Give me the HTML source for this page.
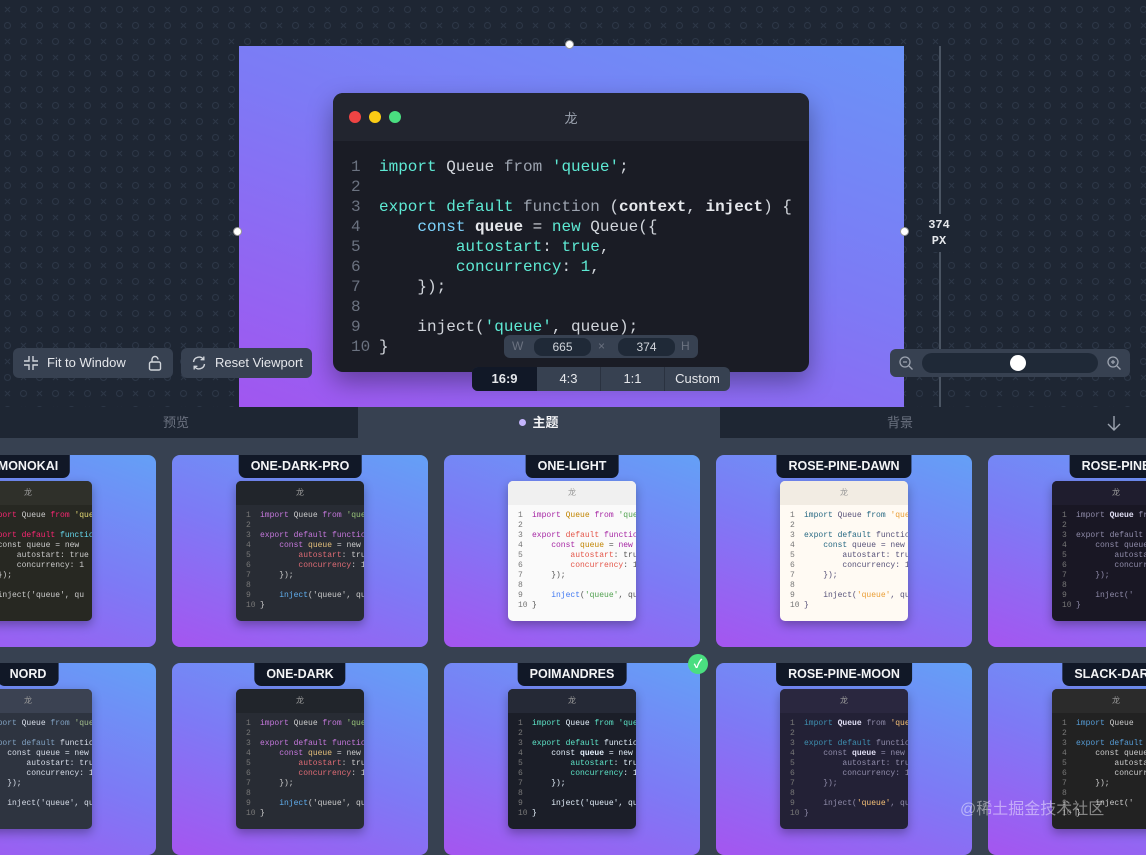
<!DOCTYPE html>
<html><head><meta charset="utf-8"><style>
*{margin:0;padding:0;box-sizing:border-box}
body{width:1146px;height:840px;overflow:hidden;background:#374151;font-family:"Liberation Sans","Noto Sans CJK SC",sans-serif;position:relative}
.top{position:absolute;left:0;top:0;width:1146px;height:407px;background:#1e2633;overflow:hidden}
.canvas{position:absolute;left:239px;top:46px;width:665px;height:361px;background:linear-gradient(200deg,#6a93f7 0%,#7d7af5 45%,#a156f0 100%)}
.win{position:absolute;left:333px;top:93px;width:476px;height:279px;border-radius:10px;background:#1a1c25;box-shadow:0 10px 25px rgba(0,0,0,.35);overflow:hidden}
.tb{height:48px;background:#22252f;position:relative}
.dot{position:absolute;width:12px;height:12px;border-radius:50%;top:18px}
.code{font-family:"Liberation Mono","DejaVu Sans Mono",monospace;font-size:16px;line-height:20px;color:#d1d5db;position:absolute;left:18px;top:64px;white-space:pre}
.n{color:#6b7280;display:inline-block;width:28px}
.k{color:#5eead4}.s{color:#5eead4}.w{color:#e5e7eb;font-weight:bold}.g{color:#9ca3af}.b{color:#7dd3fc}
.btn{position:absolute;top:348px;height:30px;background:#374151;border-radius:6px;color:#e5e7eb;font-size:13px;line-height:30px}
.handle{position:absolute;width:9px;height:9px;border-radius:50%;background:#fff;border:1px solid #999}
.tabs{position:absolute;top:407px;left:0;width:1146px;height:31px;background:#1e2633;color:#6b7280;font-size:13px;line-height:31px}
.card{position:absolute;width:256px;height:192px;border-radius:8px;background:linear-gradient(200deg,#64a0f6 0%,#7d7af5 50%,#a555f0 100%);overflow:hidden}
.lab{position:absolute;top:0;height:23px;background:#111827;color:#f3f4f6;font-weight:bold;font-size:12.5px;line-height:23px;text-align:center;border-radius:0 0 7px 7px;padding:0 12px;left:50%;transform:translateX(-50%);white-space:nowrap}
.mw{position:absolute;left:64px;top:26px;width:128px;height:140px;border-radius:5px;background:#1f2229;overflow:hidden;box-shadow:0 4px 10px rgba(0,0,0,.3)}
.mt{height:24px;background:#282b33;position:relative;font-size:8px;color:#999;text-align:center;line-height:24px}
.mc{font-family:"Liberation Mono",monospace;font-size:8px;line-height:10px;white-space:pre;color:#ccc;position:absolute;left:10px;top:30px}
.mc i{font-style:normal;color:#777;display:inline-block;width:14px}
.light{background:#fafafa}.light .mt{background:#f0f0f0}.light .mc{color:#555}
.light .mc .k{color:#a626a4}.light .mc .s{color:#50a14f}
.cream{background:#fffaf3}.cream .mt{background:#f2ece3}.cream .mc{color:#575279}
</style></head><body>
<div class="top">
<svg width="1146" height="407" style="position:absolute;left:0;top:0"><defs><pattern id="p" width="32" height="32" patternUnits="userSpaceOnUse">
<g stroke="#2d3747" stroke-width="1" fill="none"><path d="M5 7l5 5M10 7l-5 5"/><circle cx="23.5" cy="9.5" r="3"/><circle cx="7.5" cy="25.5" r="3"/><path d="M21 23l5 5M26 23l-5 5"/></g></pattern></defs><rect width="1146" height="407" fill="url(#p)"/></svg>
<div class="canvas"></div>
<div style="position:absolute;left:939px;top:46px;width:2px;height:361px;background:#4b5563"></div>
<div style="position:absolute;left:922px;top:214px;width:34px;height:38px;background:#1e2633;color:#e5e7eb;font-weight:bold;font-size:12px;text-align:center;line-height:16px;padding-top:3px;font-family:'Liberation Mono',monospace">374<br>PX</div>
</div>
<div class="handle" style="left:565px;top:40px"></div>
<div class="handle" style="left:233px;top:227px"></div>
<div class="handle" style="left:900px;top:227px"></div>
<div class="win"><div class="tb"><div class="dot" style="left:16px;background:#ef4444"></div><div class="dot" style="left:36px;background:#facc15"></div><div class="dot" style="left:56px;background:#4ade80"></div><div style="position:absolute;left:0;right:0;top:15px;text-align:center;color:#9ca3af;font-size:13px">龙</div></div>
<div class="code"><span class="n">1</span><span class="k">import</span> Queue <span class="g">from</span> <span class="s">'queue'</span>;
<span class="n">2</span>
<span class="n">3</span><span class="k">export default</span> <span class="g">function</span> (<span class="w">context</span>, <span class="w">inject</span>) {
<span class="n">4</span>    <span class="b">const</span> <span class="w">queue</span> = <span class="k">new</span> Queue({
<span class="n">5</span>        <span class="k">autostart</span>: <span class="k">true</span>,
<span class="n">6</span>        <span class="k">concurrency</span>: <span class="k">1</span>,
<span class="n">7</span>    });
<span class="n">8</span>
<span class="n">9</span>    inject(<span class="s">'queue'</span>, queue);
<span class="n">10</span>}</div></div>
<div style="position:absolute;left:504px;top:335px;width:194px;height:23px;background:#374151;border-radius:6px;color:#6b7280;font-size:12px;line-height:23px">
<span style="position:absolute;left:8px">W</span><span style="position:absolute;left:30px;top:3px;width:57px;height:18px;border-radius:8px;background:#1f2937;color:#d1d5db;text-align:center;line-height:18px">665</span><span style="position:absolute;left:94px">×</span><span style="position:absolute;left:114px;top:3px;width:57px;height:18px;border-radius:8px;background:#1f2937;color:#d1d5db;text-align:center;line-height:18px">374</span><span style="position:absolute;left:177px">H</span></div>
<div style="position:absolute;left:472px;top:367px;width:258px;height:24px;background:#374151;border-radius:6px;color:#e5e7eb;font-size:13px;line-height:24px;display:flex;overflow:hidden">
<div style="width:65px;text-align:center;background:#111827;font-weight:bold">16:9</div><div style="width:64px;text-align:center;border-right:1px solid #2a3240">4:3</div><div style="width:64px;text-align:center;border-right:1px solid #2a3240">1:1</div><div style="width:65px;text-align:center">Custom</div></div>
<div class="btn" style="left:13px;width:160px">
<svg width="16" height="16" viewBox="0 0 16 16" style="position:absolute;left:10px;top:7px" fill="none" stroke="#d1d5db" stroke-width="1.4"><path d="M6 1v5H1M10 1v5h5M6 15v-5H1M10 15v-5h5"/></svg>
<span style="position:absolute;left:34px">Fit to Window</span>
<svg width="14" height="16" viewBox="0 0 14 16" style="position:absolute;left:135px;top:7px" fill="none" stroke="#d1d5db" stroke-width="1.4"><rect x="1.5" y="7" width="11" height="8" rx="1.5"/><path d="M4 7V4.5a3 3 0 0 1 6 0"/></svg></div>
<div class="btn" style="left:181px;width:131px">
<svg width="16" height="16" viewBox="0 0 16 16" style="position:absolute;left:10px;top:7px" fill="none" stroke="#d1d5db" stroke-width="1.4"><path d="M2.5 7a5.5 5.5 0 0 1 10-2.5M13.5 9a5.5 5.5 0 0 1-10 2.5"/><path d="M12.8 1.5v3.2H9.6M3.2 14.5v-3.2h3.2"/></svg>
<span style="position:absolute;left:34px">Reset Viewport</span></div>
<div style="position:absolute;left:890px;top:349px;width:240px;height:28px;background:#374151;border-radius:6px">
<svg width="16" height="16" viewBox="0 0 16 16" style="position:absolute;left:8px;top:6px" fill="none" stroke="#9ca3af" stroke-width="1.3"><circle cx="7" cy="7" r="5"/><path d="M11 11l3.5 3.5M5 7h4"/></svg>
<div style="position:absolute;left:32px;top:4px;width:176px;height:20px;border-radius:10px;background:#1f2937"></div>
<div style="position:absolute;left:120px;top:6px;width:16px;height:16px;border-radius:50%;background:#fff"></div>
<svg width="16" height="16" viewBox="0 0 16 16" style="position:absolute;left:216px;top:6px" fill="none" stroke="#9ca3af" stroke-width="1.3"><circle cx="7" cy="7" r="5"/><path d="M11 11l3.5 3.5M5 7h4M7 5v4"/></svg></div>
<div class="tabs"><span style="position:absolute;left:163px">预览</span>
<div style="position:absolute;left:358px;width:362px;height:31px;background:#374151;color:#f3f4f6;font-weight:bold;text-align:center"><span style="display:inline-block;width:7px;height:7px;border-radius:50%;background:#c4b5fd;margin-right:6px;vertical-align:1px"></span>主题</div>
<span style="position:absolute;left:887px">背景</span>
<svg width="16" height="16" viewBox="0 0 16 16" style="position:absolute;left:1106px;top:8px" fill="none" stroke="#9ca3af" stroke-width="1.4"><path d="M8 1v14M2 9l6 6 6-6"/></svg></div>

<div class="card" style="left:-100px;top:455px"><div class="lab">MONOKAI</div><div class="mw" style="background:#272822"><div class="mt" style="background:#2f302a">龙</div><div class="mc"><i>1</i><span style="color:#f92672">import</span> Queue <span style="color:#f92672">from</span> <span style="color:#e6db74">'queue'</span>
<i>2</i>
<i>3</i><span style="color:#f92672">export default</span> <span style="color:#66d9ef">function</span>
<i>4</i>  const queue = new
<i>5</i>      autostart: true
<i>6</i>      concurrency: 1
<i>7</i>  });
<i>8</i>
<i>9</i>  inject('queue', qu
<i>10</i>}</div></div></div>
<div class="card" style="left:172px;top:455px"><div class="lab">ONE-DARK-PRO</div><div class="mw" style="background:#282c34"><div class="mt" style="background:#21252b">龙</div><div class="mc"><i>1</i><span style="color:#c678dd">import</span> Queue <span style="color:#c678dd">from</span> <span style="color:#98c379">'que</span>
<i>2</i>
<i>3</i><span style="color:#c678dd">export default</span> <span style="color:#c678dd">functio</span>
<i>4</i>    <span style="color:#c678dd">const</span> <span style="color:#e5c07b">queue</span> = new
<i>5</i>        <span style="color:#e06c75">autostart</span>: tru
<i>6</i>        <span style="color:#e06c75">concurrency</span>: 1
<i>7</i>    });
<i>8</i>
<i>9</i>    <span style="color:#61afef">inject</span>('queue', qu
<i>10</i>}</div></div></div>
<div class="card" style="left:444px;top:455px"><div class="lab">ONE-LIGHT</div><div class="mw light"><div class="mt">龙</div><div class="mc"><i>1</i><span class="k">import</span> <span style="color:#c18401">Queue</span> <span class="k">from</span> <span class="s">'que</span>
<i>2</i>
<i>3</i><span class="k">export</span> <span style="color:#e45649">default</span> <span class="k">functio</span>
<i>4</i>    <span class="k">const</span> <span style="color:#c18401">queue</span> = <span class="k">new</span>
<i>5</i>        <span style="color:#e45649">autostart</span>: tru
<i>6</i>        <span style="color:#e45649">concurrency</span>: 1
<i>7</i>    });
<i>8</i>
<i>9</i>    <span style="color:#4078f2">inject</span>(<span class="s">'queue'</span>, qu
<i>10</i>}</div></div></div>
<div class="card" style="left:716px;top:455px"><div class="lab">ROSE-PINE-DAWN</div><div class="mw cream"><div class="mt">龙</div><div class="mc"><i>1</i><span style="color:#286983">import</span> Queue <span style="color:#286983">from</span> <span style="color:#ea9d34">'que</span>
<i>2</i>
<i>3</i><span style="color:#286983">export default</span> functio
<i>4</i>    <span style="color:#286983">const</span> queue = new
<i>5</i>        autostart: tru
<i>6</i>        concurrency: 1
<i>7</i>    });
<i>8</i>
<i>9</i>    inject(<span style="color:#ea9d34">'queue'</span>, qu
<i>10</i>}</div></div></div>
<div class="card" style="left:988px;top:455px"><div class="lab">ROSE-PINE</div><div class="mw" style="background:#191724"><div class="mt" style="background:#1f1d2e">龙</div><div class="mc" style="color:#908caa"><i>1</i>import <b style="color:#e0def4">Queue</b> from
<i>2</i>
<i>3</i>export default
<i>4</i>    const queue
<i>5</i>        autostar
<i>6</i>        concurre
<i>7</i>    });
<i>8</i>
<i>9</i>    inject('
<i>10</i>}</div></div></div>

<div class="card" style="left:-100px;top:663px"><div class="lab">NORD</div><div class="mw" style="background:#2e3440"><div class="mt" style="background:#3b4252">龙</div><div class="mc" style="color:#d8dee9"><i>1</i><span style="color:#81a1c1">import</span> Queue <span style="color:#81a1c1">from</span> <span style="color:#a3be8c">'que</span>
<i>2</i>
<i>3</i><span style="color:#81a1c1">export default</span> function
<i>4</i>    const queue = new
<i>5</i>        autostart: tru
<i>6</i>        concurrency: 1
<i>7</i>    });
<i>8</i>
<i>9</i>    inject('queue', qu
<i>10</i>}</div></div></div>
<div class="card" style="left:172px;top:663px"><div class="lab">ONE-DARK</div><div class="mw" style="background:#282c34"><div class="mt" style="background:#21252b">龙</div><div class="mc"><i>1</i><span style="color:#c678dd">import</span> Queue <span style="color:#c678dd">from</span> <span style="color:#98c379">'que</span>
<i>2</i>
<i>3</i><span style="color:#c678dd">export default</span> <span style="color:#c678dd">functio</span>
<i>4</i>    <span style="color:#c678dd">const</span> <span style="color:#e5c07b">queue</span> = new
<i>5</i>        <span style="color:#e06c75">autostart</span>: tru
<i>6</i>        <span style="color:#e06c75">concurrency</span>: 1
<i>7</i>    });
<i>8</i>
<i>9</i>    <span style="color:#61afef">inject</span>('queue', qu
<i>10</i>}</div></div></div>
<div class="card" style="left:444px;top:663px"><div class="lab">POIMANDRES</div><div class="mw" style="background:#1b1e28"><div class="mt" style="background:#252936">龙</div><div class="mc" style="color:#e4f0fb"><i>1</i><span style="color:#5de4c7">import</span> Queue <span style="color:#5de4c7">from</span> <span style="color:#5de4c7">'que</span>
<i>2</i>
<i>3</i><span style="color:#5de4c7">export default</span> functio
<i>4</i>    const <b>queue</b> = new
<i>5</i>        <span style="color:#5de4c7">autostart</span>: tru
<i>6</i>        <span style="color:#5de4c7">concurrency</span>: 1
<i>7</i>    });
<i>8</i>
<i>9</i>    inject('queue', qu
<i>10</i>}</div></div></div>
<div style="position:absolute;left:688px;top:654px;width:20px;height:20px;border-radius:50%;background:#4ade80;color:#fff;font-size:12px;text-align:center;line-height:20px;font-weight:bold">✓</div>
<div class="card" style="left:716px;top:663px"><div class="lab">ROSE-PINE-MOON</div><div class="mw" style="background:#232136"><div class="mt" style="background:#2a273f">龙</div><div class="mc" style="color:#908caa"><i>1</i><span style="color:#3e8fb0">import</span> <b style="color:#e0def4">Queue</b> from <span style="color:#f6c177">'que</span>
<i>2</i>
<i>3</i><span style="color:#3e8fb0">export default</span> functio
<i>4</i>    const <b style="color:#e0def4">queue</b> = new
<i>5</i>        autostart: tru
<i>6</i>        concurrency: 1
<i>7</i>    });
<i>8</i>
<i>9</i>    inject(<span style="color:#f6c177">'queue'</span>, qu
<i>10</i>}</div></div></div>
<div class="card" style="left:988px;top:663px"><div class="lab">SLACK-DARK</div><div class="mw" style="background:#222222"><div class="mt" style="background:#2b2b2b">龙</div><div class="mc"><i>1</i><span style="color:#569cd6">import</span> Queue
<i>2</i>
<i>3</i><span style="color:#569cd6">export default</span>
<i>4</i>    const queue
<i>5</i>        autostar
<i>6</i>        concurre
<i>7</i>    });
<i>8</i>
<i>9</i>    inject('
<i>10</i>}</div></div></div>
<div style="position:absolute;left:960px;top:795px;color:rgba(255,255,255,.45);font-size:16px">@稀土掘金技术社区</div>
</body></html>
